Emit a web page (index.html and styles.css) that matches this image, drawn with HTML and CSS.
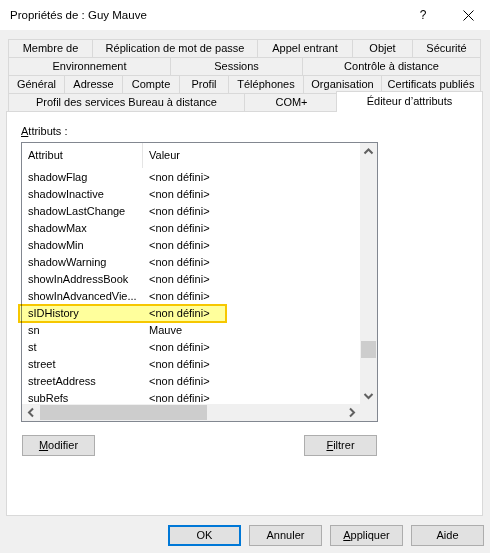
FILE: index.html
```html
<!DOCTYPE html>
<html lang="fr">
<head>
<meta charset="utf-8">
<title>Propriétés de : Guy Mauve</title>
<link rel="stylesheet" href="styles.css">
</head>
<body>
<div class="window">
  <div class="titlebar">
    <span class="title">Propriétés de : Guy Mauve</span>
    <span class="help">?</span>
    <span class="close"><svg width="11" height="11" viewBox="0 0 11 11"><path d="M0.5 0.5 L10.5 10.5 M10.5 0.5 L0.5 10.5" stroke="#000" stroke-width="1" fill="none"/></svg></span>
  </div>

  <div class="tabs">
    <div class="tabrow r1">
      <div class="tab">Membre de</div>
      <div class="tab">Réplication de mot de passe</div>
      <div class="tab">Appel entrant</div>
      <div class="tab">Objet</div>
      <div class="tab">Sécurité</div>
    </div>
    <div class="tabrow r2">
      <div class="tab">Environnement</div>
      <div class="tab">Sessions</div>
      <div class="tab">Contrôle à distance</div>
    </div>
    <div class="tabrow r3">
      <div class="tab">Général</div>
      <div class="tab">Adresse</div>
      <div class="tab">Compte</div>
      <div class="tab">Profil</div>
      <div class="tab">Téléphones</div>
      <div class="tab">Organisation</div>
      <div class="tab">Certificats publiés</div>
    </div>
    <div class="tabrow r4">
      <div class="tab t-rds">Profil des services Bureau à distance</div>
      <div class="tab t-com">COM+</div>
      <div class="tab selected">Éditeur d’attributs</div>
    </div>
  </div>

  <div class="panel">
    <div class="label"><u>A</u>ttributs :</div>
    <div class="listbox">
      <div class="listview">
        <div class="lv-header"><div class="c1">Attribut</div><div class="c2">Valeur</div></div>
        <div class="lv-row"><div class="c1">shadowFlag</div><div class="c2">&lt;non défini&gt;</div></div>
        <div class="lv-row"><div class="c1">shadowInactive</div><div class="c2">&lt;non défini&gt;</div></div>
        <div class="lv-row"><div class="c1">shadowLastChange</div><div class="c2">&lt;non défini&gt;</div></div>
        <div class="lv-row"><div class="c1">shadowMax</div><div class="c2">&lt;non défini&gt;</div></div>
        <div class="lv-row"><div class="c1">shadowMin</div><div class="c2">&lt;non défini&gt;</div></div>
        <div class="lv-row"><div class="c1">shadowWarning</div><div class="c2">&lt;non défini&gt;</div></div>
        <div class="lv-row"><div class="c1">showInAddressBook</div><div class="c2">&lt;non défini&gt;</div></div>
        <div class="lv-row"><div class="c1">showInAdvancedVie...</div><div class="c2">&lt;non défini&gt;</div></div>
        <div class="lv-row"><div class="c1">sIDHistory</div><div class="c2">&lt;non défini&gt;</div></div>
        <div class="lv-row"><div class="c1">sn</div><div class="c2">Mauve</div></div>
        <div class="lv-row"><div class="c1">st</div><div class="c2">&lt;non défini&gt;</div></div>
        <div class="lv-row"><div class="c1">street</div><div class="c2">&lt;non défini&gt;</div></div>
        <div class="lv-row"><div class="c1">streetAddress</div><div class="c2">&lt;non défini&gt;</div></div>
        <div class="lv-row"><div class="c1">subRefs</div><div class="c2">&lt;non défini&gt;</div></div>
      </div>
      <div class="vscroll">
        <div class="sbtn"><svg width="17" height="17" viewBox="0 0 17 17"><polyline points="4.5,10.5 8.5,6.5 12.5,10.5" stroke="#606060" stroke-width="2" fill="none"/></svg></div>
        <div class="vtrack"><div class="vthumb"></div></div>
        <div class="sbtn"><svg width="17" height="17" viewBox="0 0 17 17"><polyline points="4.5,7 8.5,11 12.5,7" stroke="#606060" stroke-width="2" fill="none"/></svg></div>
      </div>
      <div class="hscroll">
        <div class="sbtn"><svg width="17" height="17" viewBox="0 0 17 17"><polyline points="11,4.5 7,8.5 11,12.5" stroke="#606060" stroke-width="2" fill="none"/></svg></div>
        <div class="htrack"><div class="hthumb"></div></div>
        <div class="sbtn"><svg width="17" height="17" viewBox="0 0 17 17"><polyline points="7,4.5 11,8.5 7,12.5" stroke="#606060" stroke-width="2" fill="none"/></svg></div>
      </div>
      <div class="corner"></div>
    </div>
    <div class="panel-buttons">
      <button class="btn"><u>M</u>odifier</button>
      <button class="btn"><u>F</u>iltrer</button>
    </div>
    <div class="highlight"></div>
  </div>

  <div class="dialog-buttons">
    <button class="btn default">OK</button>
    <button class="btn">Annuler</button>
    <button class="btn"><u>A</u>ppliquer</button>
    <button class="btn">Aide</button>
  </div>
</div>
</body>
</html>
```

FILE: styles.css
```css
* { box-sizing: border-box; }
html, body { margin: 0; padding: 0; }
body {
  width: 490px;
  height: 553px;
  overflow: hidden;
  background: #f0f0f0;
  font-family: "Liberation Sans", Arial, sans-serif;
  font-size: 11px;
  color: #000;
}
.window { width: 490px; height: 553px; }

.titlebar {
  height: 30px;
  background: #fff;
  display: flex;
  align-items: center;
  padding-left: 10px;
  font-size: 11.5px;
}
.title { flex: 1; }
.help { width: 46px; text-align: center; font-size: 12px; }
.close { width: 44px; display: flex; justify-content: center; align-items: center; }
.close svg { display: block; }

.tabs { margin: 9px 0 0 8px; width: 473px; }
.tabrow { display: grid; height: 18px; }
.r1 { grid-template-columns: 84px 165px 95px 60px 69px; }
.r2 { grid-template-columns: 162px 132px 179px; }
.r3 { grid-template-columns: 56px 58px 57px 49px 75px 78px 100px; }
.r4 { display: flex; align-items: flex-start; }
.tab {
  height: 18px;
  border-top: 1px solid #d9d9d9;
  border-left: 1px solid #d9d9d9;
  text-align: center;
  line-height: 17px;
  white-space: nowrap;
  overflow: hidden;
}
.tab:last-child { border-right: 1px solid #d9d9d9; }
.t-rds { width: 236px; }
.t-com { width: 94px; }
.tab.selected {
  flex: 1;
  height: 21px;
  margin: -2px -2px 0 -2px;
  background: #fff;
  position: relative;
  z-index: 1;
  line-height: 19px;
}

.panel {
  position: relative;
  margin-left: 6px;
  width: 477px;
  height: 405px;
  background: #fff;
  border: 1px solid #d9d9d9;
  padding: 12px 0 0 14px;
}
.label { height: 15px; line-height: 15px; margin-bottom: 3px; }

.listbox {
  width: 357px;
  height: 280px;
  border: 1px solid #828790;
  display: grid;
  grid-template-columns: 1fr 17px;
  grid-template-rows: 1fr 17px;
  background: #fff;
}
.listview { overflow: hidden; }
.lv-header { display: flex; height: 25px; line-height: 24px; }
.lv-header .c1 { border-right: 1px solid #e5e5e5; }
.lv-row { display: flex; height: 17px; line-height: 18px; white-space: nowrap; }
.c1 { width: 121px; padding-left: 6px; overflow: hidden; }
.c2 { padding-left: 6px; }

.vscroll { background: #f0f0f0; display: flex; flex-direction: column; }
.sbtn { width: 17px; height: 17px; flex: none; }
.sbtn svg { display: block; }
.vtrack { flex: 1; }
.vthumb { margin: 181px 1px 0 1px; height: 17px; background: #cdcdcd; }
.hscroll { background: #f0f0f0; display: flex; }
.htrack { flex: 1; }
.hthumb { margin: 1px 0 0 1px; width: 167px; height: 15px; background: #cdcdcd; }
.corner { background: #f0f0f0; }

.panel-buttons {
  margin: 13px 0 0 1px;
  width: 355px;
  display: flex;
  justify-content: space-between;
}
.btn {
  width: 73px;
  height: 21px;
  padding: 0;
  background: #e1e1e1;
  border: 1px solid #adadad;
  font-family: "Liberation Sans", Arial, sans-serif;
  font-size: 11px;
  color: #000;
  line-height: 19px;
}
.btn.default { border: 2px solid #0078d7; line-height: 17px; }

.highlight {
  position: absolute;
  left: 11px;
  top: 192px;
  width: 209px;
  height: 19px;
  border: 2px solid #f6c700;
  background: #ffff9c;
  mix-blend-mode: multiply;
}

.dialog-buttons {
  margin-top: 9px;
  padding-right: 6px;
  display: flex;
  justify-content: flex-end;
  gap: 8px;
}
```
